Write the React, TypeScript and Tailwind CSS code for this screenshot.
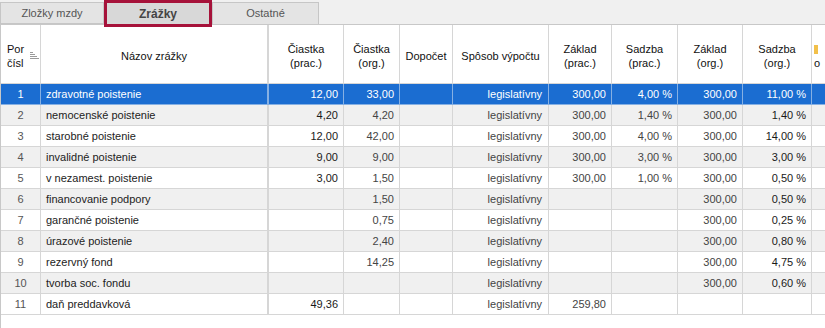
import React from "react";

type Row = string[];

const rows: Row[] = [
  ["1", "zdravotné poistenie", "12,00", "33,00", "", "legislatívny", "300,00", "4,00 %", "300,00", "11,00 %"],
  ["2", "nemocenské poistenie", "4,20", "4,20", "", "legislatívny", "300,00", "1,40 %", "300,00", "1,40 %"],
  ["3", "starobné poistenie", "12,00", "42,00", "", "legislatívny", "300,00", "4,00 %", "300,00", "14,00 %"],
  ["4", "invalidné poistenie", "9,00", "9,00", "", "legislatívny", "300,00", "3,00 %", "300,00", "3,00 %"],
  ["5", "v nezamest. poistenie", "3,00", "1,50", "", "legislatívny", "300,00", "1,00 %", "300,00", "0,50 %"],
  ["6", "financovanie podpory", "", "1,50", "", "legislatívny", "", "", "300,00", "0,50 %"],
  ["7", "garančné poistenie", "", "0,75", "", "legislatívny", "", "", "300,00", "0,25 %"],
  ["8", "úrazové poistenie", "", "2,40", "", "legislatívny", "", "", "300,00", "0,80 %"],
  ["9", "rezervný fond", "", "14,25", "", "legislatívny", "", "", "300,00", "4,75 %"],
  ["10", "tvorba soc. fondu", "", "", "", "legislatívny", "", "", "300,00", "0,60 %"],
  ["11", "daň preddavková", "49,36", "", "", "legislatívny", "259,80", "", "", ""],
];

// per-column cell styling (alignment + text colour)
const colCls = [
  "justify-center text-[#555]",
  "justify-start pl-[5px] text-[#222] border-r-2",
  "justify-end pr-[5px] text-[#1a1a1a]",
  "justify-end pr-[5px] text-[#444]",
  "justify-end pr-[5px] text-[#444]",
  "justify-end pr-[6px] text-[#444]",
  "justify-end pr-[5px] text-[#444]",
  "justify-end pr-[5px] text-[#444]",
  "justify-end pr-[5px] text-[#444]",
  "justify-end pr-[5px] text-[#1a1a1a]",
  "justify-start",
];

function SortIcon() {
  return (
    <svg width="9" height="8" viewBox="0 0 9 8" className="ml-[6px]">
      <rect x="0" y="0" width="3" height="1" fill="#9a9a9a" />
      <rect x="0" y="2" width="5" height="1" fill="#9a9a9a" />
      <rect x="0" y="4" width="7" height="1" fill="#9a9a9a" />
      <rect x="0" y="6" width="9" height="1" fill="#9a9a9a" />
    </svg>
  );
}

function Head({ children, cls = "" }: { children?: React.ReactNode; cls?: string }) {
  return (
    <div
      className={`flex h-[59px] items-center justify-center border-r border-b border-[#d6d6d6] pt-[3px] text-center leading-[14px] text-[#111] ${cls}`}
    >
      {children}
    </div>
  );
}

export default function App() {
  return (
    <div
      className="h-[328px] w-[825px] overflow-hidden bg-white text-[11px]"
      style={{ fontFamily: '"Liberation Sans", Arial, sans-serif' }}
    >
      {/* TABS */}
      <div className="flex h-[25px] border-b border-[#c8c8c8] bg-[#f0f0f0]">
        <div className="mt-[2px] flex h-[22px] w-[104px] items-center justify-center border border-[#c6c6c6] bg-[#e4e4e4] text-[11px] text-[#555]">
          Zložky mzdy
        </div>
        <div className="relative z-10 flex h-[27px] w-[108px] items-center justify-center border-[3px] border-[#a6123a] bg-[#d8d8d8] text-[12px] font-bold text-[#444]">
          Zrážky
        </div>
        <div className="mt-[2px] flex h-[22px] w-[107px] items-center justify-center border border-b-0 border-[#c6c6c6] bg-[#e4e4e4] text-[11px] text-[#555]">
          Ostatné
        </div>
      </div>

      {/* GRID */}
      <div className="h-[303px] border-l border-[#c8c8c8]">
        <div className="grid w-[924px] grid-cols-[40px_228px_75px_56px_53px_96px_63px_66px_65px_69px_100px]">
          <Head cls="justify-start pl-[6px] text-left">
            <span>
              Por
              <br />
              čísl
            </span>
            <SortIcon />
          </Head>
          <Head cls="border-r-2">Názov zrážky</Head>
          <Head>
            Čiastka
            <br />
            (prac.)
          </Head>
          <Head>
            Čiastka
            <br />
            (org.)
          </Head>
          <Head>Dopočet</Head>
          <Head>Spôsob výpočtu</Head>
          <Head>
            Základ
            <br />
            (prac.)
          </Head>
          <Head>
            Sadzba
            <br />
            (prac.)
          </Head>
          <Head>
            Základ
            <br />
            (org.)
          </Head>
          <Head>
            Sadzba
            <br />
            (org.)
          </Head>
          <Head cls="justify-start pl-[2px] text-left border-r-0">
            <span>
              <span className="inline-block h-[9px] w-[4px] bg-[#f2c04a] align-middle" />
              <br />
              o
            </span>
          </Head>

          {rows.map((row, i) => {
            const selected = i === 0;
            const bg = selected ? "bg-[#1b6dd1]" : i % 2 === 1 ? "bg-[#f0f0f0]" : "bg-white";
            return [...row, ""].map((val, c) => (
              <div
                key={`${i}-${c}`}
                className={`flex h-[21px] items-center border-b border-r whitespace-nowrap ${bg} ${colCls[c]} ${
                  selected ? "border-[#86b0e3] text-white" : "border-[#d6d6d6]"
                } ${c === 10 ? "border-r-0" : ""}`}
              >
                {val}
              </div>
            ));
          })}
        </div>
      </div>
    </div>
  );
}
